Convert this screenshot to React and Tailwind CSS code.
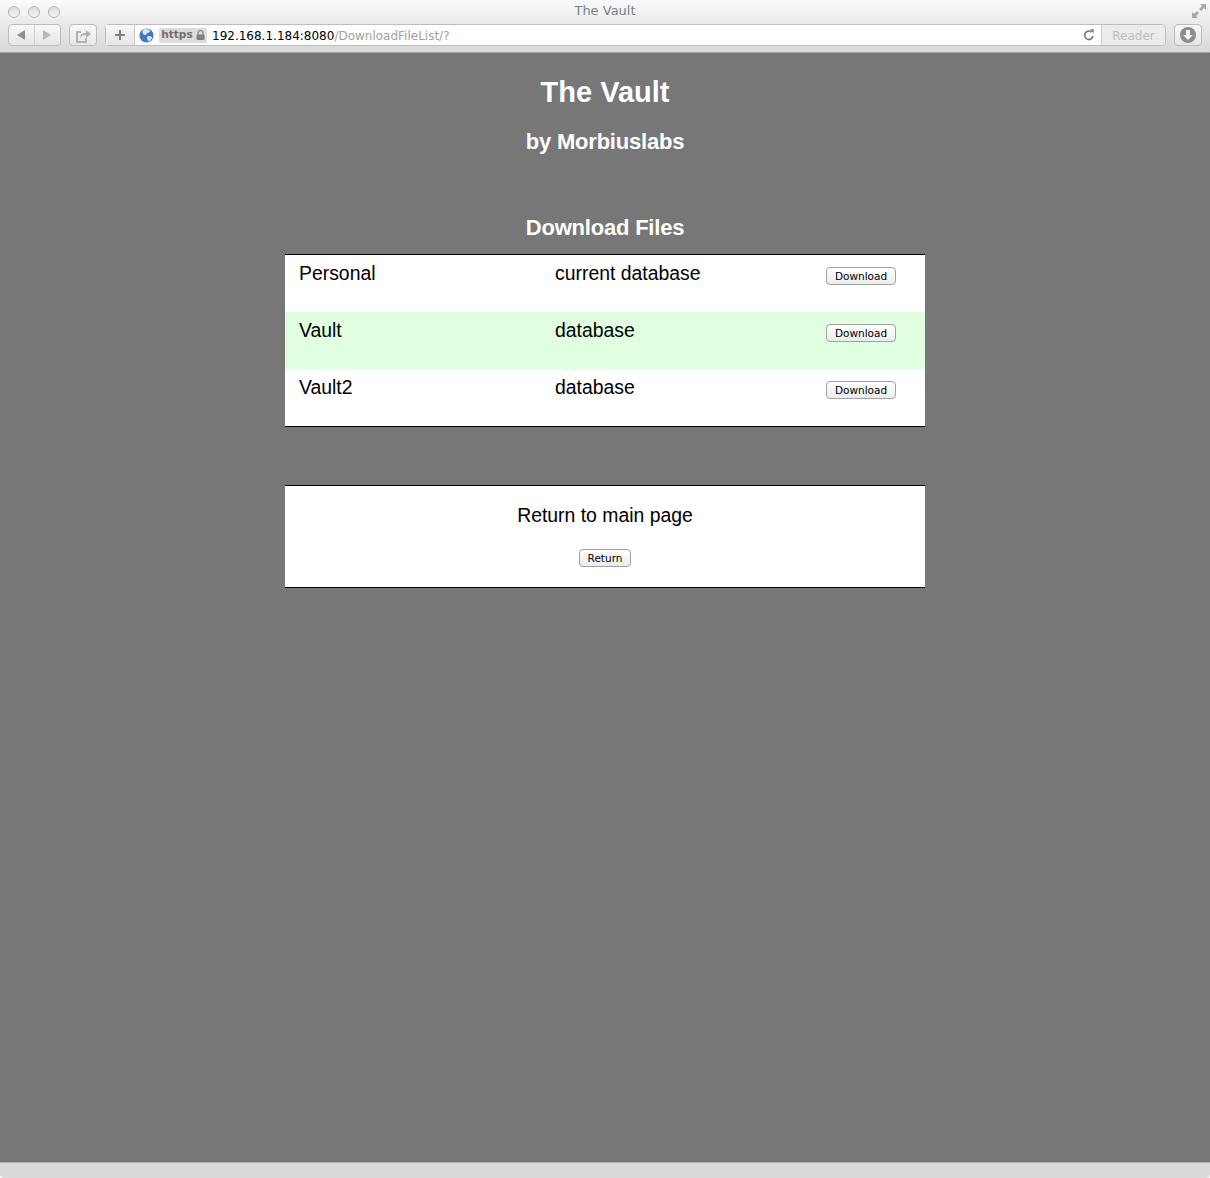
import React from 'react';

const files = [
  { name: 'Personal', type: 'current database', bg: 'bg-white' },
  { name: 'Vault', type: 'database', bg: 'bg-[#e0ffe0]' },
  { name: 'Vault2', type: 'database', bg: 'bg-white' },
];

const PageButton = ({ label, className }) => (
  <button
    type="button"
    className={`h-[18px] rounded-[4px] border border-[#a0a0a0] bg-gradient-to-b from-white to-[#ececec] font-['DejaVu_Sans',sans-serif] text-[10.500px] leading-[16px] text-black ${className}`}
  >
    {label}
  </button>
);

const Dot = () => <div className="h-3 w-3 rounded-full border border-[#b4b4b4] bg-gradient-to-b from-[#dcdcdc] to-[#f6f6f6]" />;

const ToolBox = ({ className, children }) => (
  <div className={`flex h-[22px] items-center justify-center rounded-[4px] border border-[#bdbdbd] bg-gradient-to-b from-[#f8f8f8] to-[#e6e6e6] ${className}`}>
    {children}
  </div>
);

const BrowserChrome = () => (
  <div className="h-[53px] border-b border-[#a8a8a8] bg-gradient-to-b from-[#fafafa] to-[#d8d8d8] font-['DejaVu_Sans',sans-serif]">
    <div className="relative flex h-[24px] items-center gap-2 pl-2">
      <Dot />
      <Dot />
      <Dot />
      <div className="absolute inset-x-0 top-[3px] text-center text-[13px] leading-4 text-[#77808c]">The Vault</div>
      <svg className="absolute right-[4px] top-[4px]" width="14" height="14" viewBox="0 0 14 14" fill="#a8a8a8">
        <path d="M8 0h6v6l-2-2-3 3-2-2 3-3zM0 14V8l2 2 3-3 2 2-3 3 2 2z" />
      </svg>
    </div>
    <div className="flex h-[22px] items-center pl-2 pr-2">
      <ToolBox className="w-[53px]">
        <div className="flex h-full w-1/2 items-center justify-center border-r border-[#d0d0d0]">
          <div className="h-0 w-0 border-y-[5px] border-r-[8px] border-y-transparent border-r-[#909090]" />
        </div>
        <div className="flex h-full w-1/2 items-center justify-center">
          <div className="h-0 w-0 border-y-[5px] border-l-[8px] border-y-transparent border-l-[#b8b8b8]" />
        </div>
      </ToolBox>
      <ToolBox className="ml-2 w-[28px]">
        <svg width="18" height="15" viewBox="0 0 18 15" fill="none" stroke="#a0a0a0" strokeWidth="1.500">
          <path d="M12 10v4H3V4h4" />
          <path d="M6 10c0-3 2-5 6-5V2L17 6l-5 4V7c-3 0-5 1-6 3z" fill="#b0b0b0" stroke="none" />
        </svg>
      </ToolBox>
      <div className="ml-[8px] flex h-[22px] flex-1 items-center rounded-[4px] border border-[#bdbdbd] bg-white">
        <div className="flex h-full w-[29px] shrink-0 items-center justify-center border-r border-[#c8c8c8] bg-gradient-to-b from-[#f8f8f8] to-[#e6e6e6]">
          <svg width="12" height="12" viewBox="0 0 12 12" fill="none" stroke="#808080" strokeWidth="2">
            <path d="M6 1v10M1 6h10" />
          </svg>
        </div>
        <svg className="ml-[4px] shrink-0" width="15" height="15" viewBox="0 0 16 16">
          <circle cx="8" cy="8" r="7.500" fill="#3f78c9" />
          <path d="M5 1.500c3-1 6 0 7 2-1 2-3 1-4 3s-3 1-4-1 0-3 1-4zM9 9c2-1 4 0 5 1-1 2-2 4-4 4-1-2-2-3-1-5z" fill="#d8e6f6" />
        </svg>
        <div className="ml-[5px] flex h-[15px] w-[48px] shrink-0 items-center justify-center gap-[3px] rounded-[2px] bg-[#dcdcdc] text-[10.500px] font-bold text-[#707070]">
          https
          <svg width="9" height="10" viewBox="0 0 9 10">
            <path d="M2 5V3a2.500 2.500 0 0 1 5 0v2" fill="none" stroke="#808080" strokeWidth="1.200" />
            <rect x="0.500" y="4.500" width="8" height="5.500" rx="1" fill="#808080" />
          </svg>
        </div>
        <div className="ml-[5px] flex-1 pt-px text-[12px] text-black">
          192.168.1.184:8080<span className="text-[#a0a0a0]">/DownloadFileList/?</span>
        </div>
        <svg className="mr-[6px] shrink-0" width="12" height="12" viewBox="0 0 12 12" fill="none">
          <path d="M10 7a4.200 4.200 0 1 1-1.500-4" stroke="#808080" strokeWidth="1.800" />
          <path d="M7 0l4 .5-.5 4z" fill="#808080" />
        </svg>
        <div className="flex h-full w-[64px] shrink-0 items-center justify-center rounded-r-[4px] border-l border-[#c8c8c8] bg-[#ececec] pt-px text-[12px] text-[#bdbdbd]">
          Reader
        </div>
      </div>
      <ToolBox className="ml-[8px] w-[28px]">
        <div className="flex h-4 w-4 items-center justify-center rounded-full bg-[#8c8c8c]">
          <svg width="10" height="10" viewBox="0 0 10 10" fill="#f2f2f2">
            <path d="M3 0h4v5h3L5 10 0 5h3z" />
          </svg>
        </div>
      </ToolBox>
    </div>
  </div>
);

export default function App() {
  return (
    <div className="flex h-[1178px] flex-col overflow-hidden bg-[#777777] font-['Liberation_Sans',sans-serif]">
      <BrowserChrome />

      <main className="flex flex-1 flex-col items-center text-center text-white">
        <h1 className="mt-[21px] h-[36px] text-[29px] font-bold leading-[36px]">The Vault</h1>
        <h2 className="mt-[18px] h-[28px] text-[22px] font-bold leading-[28px] tracking-[-0.2px]">by Morbiuslabs</h2>
        <h2 className="mt-[58px] h-[28px] text-[22px] font-bold leading-[28px] tracking-[-0.2px]">Download Files</h2>

        <div className="mt-[12px] w-[640px] border-y border-black text-left text-[19.400px] leading-[23px] text-black">
          {files.map((f) => (
            <div key={f.name} className={`flex h-[57px] pl-[14px] pt-[7px] ${f.bg}`}>
              <div className="w-[256px]">{f.name}</div>
              <div className="w-[271px]">{f.type}</div>
              <PageButton label="Download" className="mt-[5px] w-[70px]" />
            </div>
          ))}
        </div>

        <div className="mt-[58px] flex h-[103px] w-[640px] flex-col items-center border-y border-black bg-white text-[19.400px] text-black">
          <div className="mt-[18px] leading-[23px]">Return to main page</div>
          <PageButton label="Return" className="mt-[22px] w-[52px]" />
        </div>
      </main>

      <div className="h-[16px] bg-white">
        <div className="h-full rounded-b-[4px] border-t border-[#b0b0b0] bg-[#dadada]" />
      </div>
    </div>
  );
}
